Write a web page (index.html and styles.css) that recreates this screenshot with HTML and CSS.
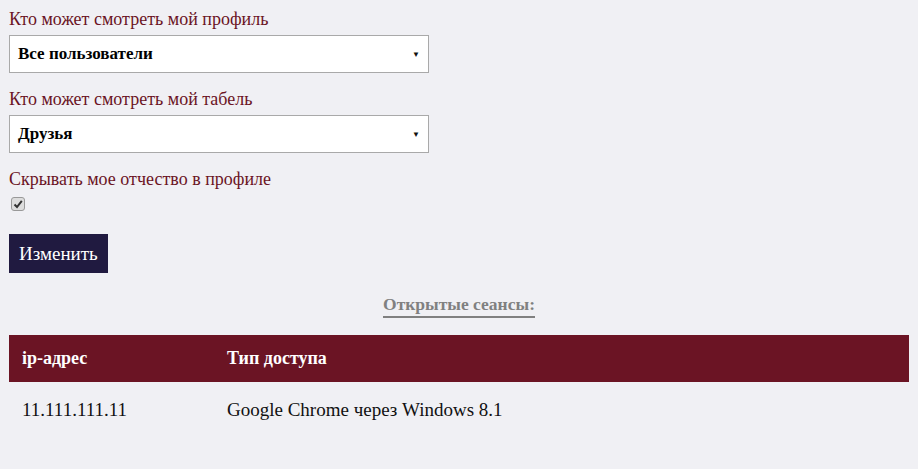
FILE: index.html
```html
<!DOCTYPE html>
<html lang="ru">
<head>
<meta charset="utf-8">
<link rel="stylesheet" href="styles.css">
</head>
<body>
<div class="page">
  <form class="settings">
    <div class="field">
      <label class="label">Кто может смотреть мой профиль</label>
      <div class="select"><span>Все пользователи</span><span class="arrow">▼</span></div>
    </div>
    <div class="field">
      <label class="label">Кто может смотреть мой табель</label>
      <div class="select"><span>Друзья</span><span class="arrow">▼</span></div>
    </div>
    <div class="field">
      <label class="label">Скрывать мое отчество в профиле</label>
      <span class="check"><svg width="10" height="10" viewBox="0 0 10 10"><path d="M1.5 5.5 L4 8 L8.8 1.8" fill="none" stroke="#333" stroke-width="2"/></svg></span>
    </div>
    <button type="button" class="btn">Изменить</button>
  </form>
  <div class="sessions-title"><span>Открытые сеансы:</span></div>
  <table class="sessions">
    <colgroup><col class="c1"><col></colgroup>
    <thead>
      <tr><th>ip-адрес</th><th>Тип доступа</th></tr>
    </thead>
    <tbody>
      <tr><td>11.111.111.11</td><td>Google Chrome через Windows 8.1</td></tr>
    </tbody>
  </table>
</div>
</body>
</html>
```
FILE: styles.css
```css
html, body {
  margin: 0;
  padding: 0;
  background: #f0f0f4;
}
body {
  font-family: "Liberation Serif", "DejaVu Serif", serif;
}
.page {
  width: 900px;
  padding: 9px 9px 0 9px;
}
.settings {
  display: flex;
  flex-direction: column;
  align-items: flex-start;
}
.field {
  display: flex;
  flex-direction: column;
  align-items: flex-start;
  margin-bottom: 16px;
}
.label {
  color: #6b1424;
  font-size: 18px;
  line-height: 20px;
  margin-bottom: 6px;
}
.select {
  box-sizing: border-box;
  width: 420px;
  height: 38px;
  background: #fff;
  border: 1px solid #a9a9a9;
  display: flex;
  align-items: center;
  justify-content: space-between;
  padding: 0 8px 0 8px;
  font-size: 17px;
  font-weight: bold;
  color: #000;
}
.arrow {
  font-size: 8px;
  color: #111;
}
.check {
  box-sizing: border-box;
  width: 14px;
  height: 14px;
  margin-left: 2px;
  margin-top: 2px;
  border: 1px solid #999;
  border-radius: 3px;
  background: #ddd;
  display: flex;
  align-items: center;
  justify-content: center;
}
.btn {
  margin-top: 7px;
  background: #201a40;
  color: #fff;
  border: none;
  height: 39px;
  padding: 0 10px;
  font-family: inherit;
  font-size: 19px;
}
.sessions-title {
  text-align: center;
  margin-top: 21px;
  margin-bottom: 17px;
}
.sessions-title span {
  color: #808080;
  font-weight: bold;
  font-size: 17.5px;
  display: inline-block;
  padding-bottom: 1px;
  border-bottom: 2px solid #808080;
}
.sessions {
  width: 900px;
  border-collapse: collapse;
  table-layout: fixed;
}
.sessions col.c1 {
  width: 205px;
}
.sessions th {
  background: #6b1424;
  color: #fff;
  text-align: left;
  font-size: 18px;
  font-weight: bold;
  height: 47px;
  padding: 0 13px;
}
.sessions td {
  font-size: 19px;
  color: #111;
  height: 56px;
  padding: 0 13px;
}
```
